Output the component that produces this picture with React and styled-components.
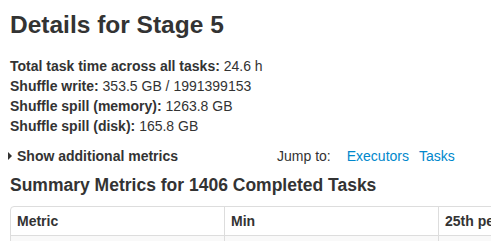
import React from "react";
import styled, { createGlobalStyle } from "styled-components";

const GlobalStyle = createGlobalStyle`
  html, body {
    margin: 0;
    padding: 0;
    background: #fff;
    overflow: hidden;
  }
  body {
    font-family: "Liberation Sans", Arial, Helvetica, sans-serif;
    font-size: 14px;
    line-height: 20px;
    color: #333;
  }
`;

const summary = [
  { label: "Total task time across all tasks:", value: "24.6 h" },
  { label: "Shuffle write:", value: "353.5 GB / 1991399153" },
  { label: "Shuffle spill (memory):", value: "1263.8 GB" },
  { label: "Shuffle spill (disk):", value: "165.8 GB" },
];

const columns = [
  "Metric",
  "Min",
  "25th percentile",
  "Median",
  "75th percentile",
  "Max",
];

function App() {
  return (
    <Page>
      <GlobalStyle />
      <Title>Details for Stage 5</Title>
      <InfoList>
        {summary.map((item) => (
          <li key={item.label}>
            <strong>{item.label}</strong> {item.value}
          </li>
        ))}
      </InfoList>
      <ToolRow>
        <Expander>
          <Arrow />
          Show additional metrics
        </Expander>
        <JumpTo>
          <span>Jump to:</span>
          <Link href="#">Executors</Link>
          <Link href="#">Tasks</Link>
        </JumpTo>
      </ToolRow>
      <SubTitle>Summary Metrics for 1406 Completed Tasks</SubTitle>
      <TableClip>
        <Table>
          <thead>
            <tr>
              {columns.map((c) => (
                <Th key={c}>{c}</Th>
              ))}
            </tr>
          </thead>
          <tbody>
            <Row striped>
              {columns.map((c, i) => (
                <Td key={c}>{i === 0 ? "Duration" : "0.1 s"}</Td>
              ))}
            </Row>
          </tbody>
        </Table>
      </TableClip>
    </Page>
  );
}

export default App;

const Page = styled.div`
  padding: 0 10px;
`;

const Title = styled.h3`
  margin: 10px 0 16px;
  font-size: 24.5px;
  line-height: 30px;
  font-weight: bold;
`;

const InfoList = styled.ul`
  list-style: none;
  margin: 0;
  padding: 0;
  li {
    line-height: 20px;
  }
  strong {
    font-weight: bold;
  }
`;

const ToolRow = styled.div`
  display: flex;
  align-items: center;
  margin-top: 10px;
  height: 20px;
`;

const Expander = styled.span`
  display: flex;
  align-items: center;
  font-weight: bold;
  cursor: pointer;
`;

const Arrow = styled.span`
  width: 0;
  height: 0;
  margin: 0 5px 0 -2px;
  border-top: 4px solid transparent;
  border-bottom: 4px solid transparent;
  border-left: 4px solid #333;
`;

const JumpTo = styled.span`
  margin-left: 99px;
  display: flex;
  gap: 10px;
  & > span {
    margin-right: 6px;
  }
`;

const Link = styled.a`
  color: #0088cc;
  text-decoration: none;
`;

const SubTitle = styled.h4`
  margin: 8px 0 10px;
  font-size: 17.5px;
  line-height: 22px;
  font-weight: bold;
`;

const TableClip = styled.div`
  width: 1284px;
`;

const Table = styled.table`
  border-collapse: separate;
  border-spacing: 0;
  border: 1px solid #ddd;
  border-radius: 4px;
  table-layout: fixed;
  width: 100%;
`;

const Th = styled.th`
  width: 214px;
  box-sizing: border-box;
  padding: 4px 6px;
  text-align: left;
  font-weight: bold;
  line-height: 20px;
  border-left: 1px solid #ddd;
  &:first-child {
    width: 213px;
    border-left: none;
  }
`;

const Row = styled.tr`
  background: ${({ striped }) => (striped ? "#f9f9f9" : "#fff")};
`;

const Td = styled.td`
  padding: 4px 6px;
  line-height: 20px;
  border-top: 1px solid #ddd;
  border-left: 1px solid #ddd;
  &:first-child {
    border-left: none;
  }
`;
